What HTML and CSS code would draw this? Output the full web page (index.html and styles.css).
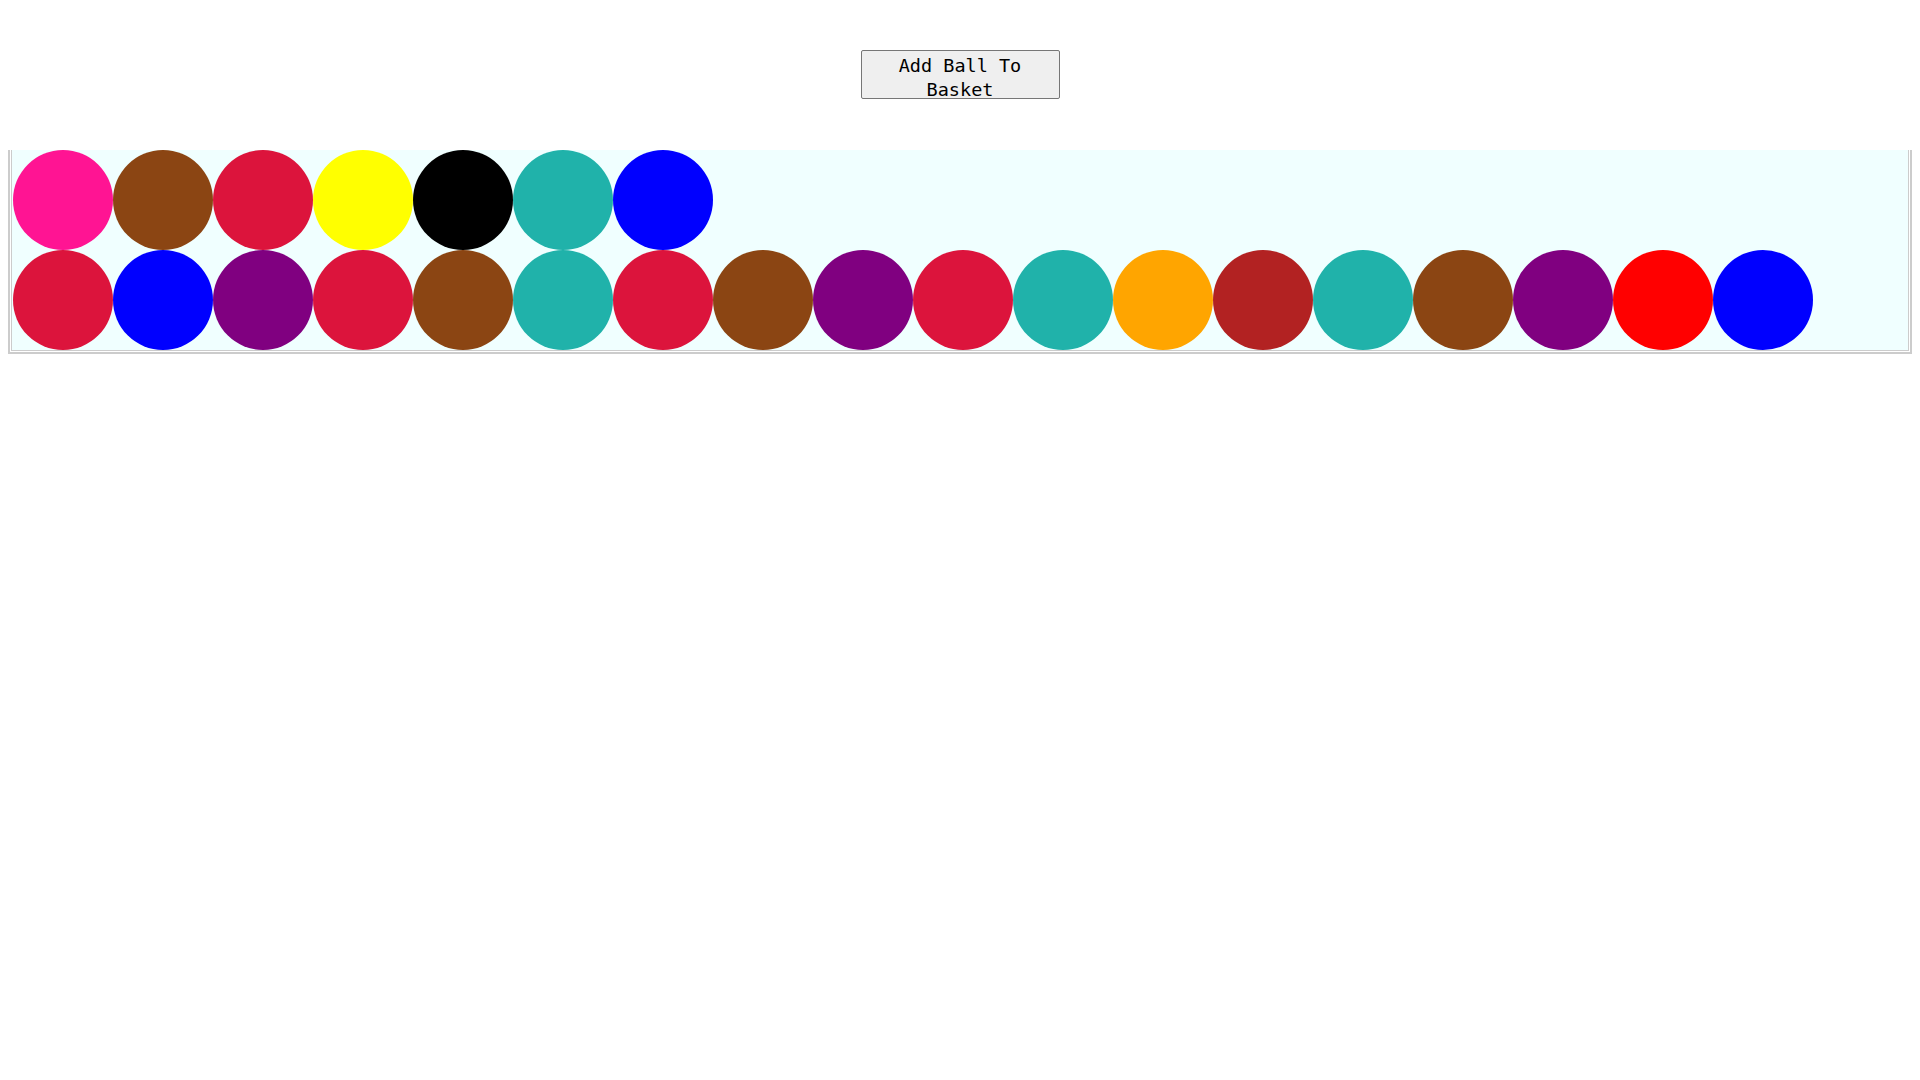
FILE: index.html
```html
<!DOCTYPE html>
<html>
<head>
<meta charset="utf-8">
<link rel="stylesheet" href="styles.css">
</head>
<body>
<div class="controls">
  <button class="add-btn">Add Ball To Basket</button>
</div>
<div class="basket">
  <div class="basket-inner">
    <div class="ball crimson"></div>
    <div class="ball blue"></div>
    <div class="ball purple"></div>
    <div class="ball crimson"></div>
    <div class="ball brown"></div>
    <div class="ball seagreen"></div>
    <div class="ball crimson"></div>
    <div class="ball brown"></div>
    <div class="ball purple"></div>
    <div class="ball crimson"></div>
    <div class="ball seagreen"></div>
    <div class="ball orange"></div>
    <div class="ball firebrick"></div>
    <div class="ball seagreen"></div>
    <div class="ball brown"></div>
    <div class="ball purple"></div>
    <div class="ball red"></div>
    <div class="ball blue"></div>
    <div class="ball pink"></div>
    <div class="ball brown"></div>
    <div class="ball crimson"></div>
    <div class="ball yellow"></div>
    <div class="ball black"></div>
    <div class="ball seagreen"></div>
    <div class="ball blue"></div>
  </div>
</div>
</body>
</html>
```
FILE: styles.css
```css
html, body {
  background: #ffffff;
}
body {
  margin: 8px;
}
.controls {
  padding-top: 42px;
  padding-bottom: 51px;
  display: flex;
  justify-content: center;
}
.add-btn {
  box-sizing: border-box;
  width: 199px;
  height: 49px;
  padding: 3px 0 0 0;
  margin: 0;
  background: #efefef;
  border: 1px solid #767676;
  border-radius: 2px;
  color: #000;
  font-family: "DejaVu Sans Mono", monospace;
  font-size: 18.5px;
  line-height: 24px;
  text-align: center;
  overflow: visible;
}
.basket {
  width: 1898px;
  border: 2px solid #cccccc;
  border-top: none;
  padding: 0 1px 1px 1px;
}
.basket-inner {
  display: flex;
  flex-wrap: wrap-reverse;
  border: 1px solid #cccccc;
  border-top: none;
  background: #f0ffff;
  padding-left: 1px;
}
.ball {
  width: 100px;
  height: 100px;
  border-radius: 50%;
  flex: 0 0 auto;
}
.pink { background: #ff1493; }
.brown { background: #8b4513; }
.crimson { background: #dc143c; }
.yellow { background: #ffff00; }
.black { background: #000000; }
.seagreen { background: #20b2aa; }
.blue { background: #0000ff; }
.purple { background: #800080; }
.orange { background: #ffa500; }
.firebrick { background: #b22222; }
.red { background: #ff0000; }
```
